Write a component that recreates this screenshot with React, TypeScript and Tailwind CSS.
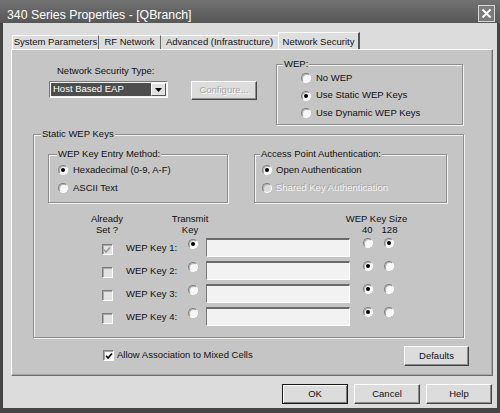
import React from 'react';

// classic sunken radio button
function Radio({ on = false, dim = false }: { on?: boolean; dim?: boolean }) {
  return (
    <span
      className={`flex items-center justify-center w-[10px] h-[10px] shrink-0 rounded-full border border-t-[#7d7d7d] border-l-[#7d7d7d] border-r-white border-b-white shadow-[inset_1px_1px_0_#b4b4b4] ${
        dim ? 'bg-[#dcdcdc]' : 'bg-[#f7f7f7]'
      }`}
    >
      {on && <span className="w-[4px] h-[4px] rounded-full bg-black" />}
    </span>
  );
}

function Check({ on = false, dim = false }: { on?: boolean; dim?: boolean }) {
  return (
    <span
      className={`flex items-center justify-center w-[11px] h-[11px] shrink-0 border border-t-[#7d7d7d] border-l-[#7d7d7d] border-r-white border-b-white shadow-[inset_1px_1px_0_#a8a8a8] ${
        dim ? 'bg-[#e2e2e2]' : 'bg-[#f7f7f7]'
      }`}
    >
      {on && (
        <svg viewBox="0 0 8 8" className="w-[8px] h-[8px]">
          <path d="M1 3.8 L3 6 L7 1.5" fill="none" stroke={dim ? '#9a9a9a' : '#000'} strokeWidth="1.6" />
        </svg>
      )}
    </span>
  );
}

function Group({
  label,
  lx = 'left-[6px]',
  className = '',
  children,
}: {
  label: string;
  lx?: string;
  className?: string;
  children?: React.ReactNode;
}) {
  return (
    <div className={`relative shrink-0 border border-[#8e8e8e] shadow-[inset_1px_1px_0_#f2f2f2,1px_1px_0_#f2f2f2] ${className}`}>
      <span className={`absolute ${lx} -top-[7px] px-[1px] leading-[12px] bg-[#c5c5c5]`}>{label}</span>
      {children}
    </div>
  );
}

function Btn({
  children,
  def = false,
  disabled = false,
  className = '',
}: {
  children: React.ReactNode;
  def?: boolean;
  disabled?: boolean;
  className?: string;
}) {
  const edge = def
    ? 'border border-[#1a1a1a] shadow-[inset_1px_1px_0_#fff,inset_-1px_-1px_0_#7a7a7a]'
    : 'border border-t-white border-l-white border-r-[#444] border-b-[#444] shadow-[inset_-1px_-1px_0_#8c8c8c]';
  return (
    <div className={`flex items-center justify-center shrink-0 bg-[#dcdcdc] ${edge} ${className}`}>
      <span className={disabled ? 'text-[#a6a6a6] [text-shadow:1px_1px_0_#fff]' : ''}>{children}</span>
    </div>
  );
}

function KeyRow({ n, set, tx, big }: { n: number; set?: boolean; tx?: boolean; big?: boolean }) {
  return (
    <div className="flex items-start h-[23px]">
      <span className="ml-[58px] w-[30px] mt-[6px] flex justify-center">
        <Check on={set} dim />
      </span>
      <span className="w-[66px] pl-[4px] mt-[4px] leading-[12px]">WEP Key {n}:</span>
      <span className="mt-[1px]">
        <Radio on={tx} />
      </span>
      <div className="ml-[8px] w-[144px] h-[19px] bg-[#f2f2f2] border-t-2 border-l border-r border-b border-t-[#6a6a6a] border-l-[#7a7a7a] border-r-white border-b-white" />
      <span className="ml-[13px]">
        <Radio on={!big} />
      </span>
      <span className="ml-[11px]">
        <Radio on={big} />
      </span>
    </div>
  );
}

export default function App() {
  return (
    <div className="w-[500px] h-[413px] flex flex-col bg-[#454545] font-['Liberation_Sans',Arial,sans-serif] text-[9.5px] text-[#111] select-none overflow-hidden">
      {/* Title bar */}
      <div className="h-[23px] shrink-0 flex items-start justify-between pl-[7px] pr-[5px] bg-gradient-to-b from-[#727272] to-[#575757]">
        <span className="mt-[7px] leading-[16px] text-[12.3px] text-white">340 Series Properties - [QBranch]</span>
        <span className="mt-[5px] w-[17px] h-[17px] flex items-center justify-center bg-[#7c7c7c] border border-[#d6d6d6]">
          <svg viewBox="0 0 11 11" className="w-[11px] h-[11px]">
            <path d="M1.5 1.5 L9.5 9.5 M9.5 1.5 L1.5 9.5" stroke="#fff" strokeWidth="1.8" />
          </svg>
        </span>
      </div>

      {/* Dialog body */}
      <div className="mx-[3px] h-[385px] shrink-0 flex flex-col bg-[#dcdcdc]">
        {/* Tabs */}
        <div className="mt-[9px] ml-[9px] h-[17px] flex items-end">
          <div className="w-[87px] h-[14px] flex items-center justify-center border-t border-l border-r border-t-white border-l-white border-r-[#6a6a6a]">
            System Parameters
          </div>
          <div className="w-[62px] h-[14px] flex items-center justify-center border-t border-r border-t-white border-r-[#6a6a6a]">
            RF Network
          </div>
          <div className="w-[117px] h-[14px] flex items-center justify-center border-t border-t-white">
            Advanced (Infrastructure)
          </div>
          <div className="w-[82px] h-[17px] pt-[3px] flex items-center justify-center bg-[#dedede] border-t border-l border-r-2 border-t-white border-l-white border-r-[#555]">
            Network Security
          </div>
        </div>

        {/* Tab panel */}
        <div className="ml-[8px] w-[482px] h-[327px] shrink-0 flex flex-col bg-[#c5c5c5] border border-t-white border-l-white border-r-[#6e6e6e] border-b-[#6e6e6e] shadow-[inset_-1px_-1px_0_#a4a4a4]">
          <div className="mt-[14px] flex items-start">
            <div className="w-[264px] flex flex-col">
              <span className="ml-[45px] mt-[1px] leading-[11px]">Network Security Type:</span>
              <div className="ml-[37px] mt-[5px] flex items-start">
                <div className="w-[119px] h-[17px] flex p-[1px] bg-[#f2f2f2] border border-t-[#7a7a7a] border-l-[#7a7a7a] border-r-white border-b-white">
                  <span className="flex-1 flex items-center pl-[2px] bg-[#4e4e4e] text-white">Host Based EAP</span>
                  <span className="w-[15px] flex items-center justify-center bg-[#e2e2e2] border border-t-white border-l-white border-r-[#555] border-b-[#555]">
                    <svg viewBox="0 0 7 4" className="w-[7px] h-[4px]">
                      <path d="M0 0 H7 L3.5 4 Z" fill="#000" />
                    </svg>
                  </span>
                </div>
                <Btn disabled className="ml-[23px] w-[66px] h-[19px]">
                  Configure...
                </Btn>
              </div>
            </div>
            <Group label="WEP:" className="w-[187px] h-[61px]">
              <div className="flex flex-col pt-[7px] pl-[24px] gap-[5.5px]">
                <div className="h-[12px] flex items-center gap-[5px]">
                  <Radio />
                  <span>No WEP</span>
                </div>
                <div className="h-[12px] flex items-center gap-[5px]">
                  <Radio on />
                  <span>Use Static WEP Keys</span>
                </div>
                <div className="h-[12px] flex items-center gap-[5px]">
                  <Radio />
                  <span>Use Dynamic WEP Keys</span>
                </div>
              </div>
            </Group>
          </div>

          <Group label="Static WEP Keys" lx="left-[7px]" className="ml-[21px] mt-[9px] w-[431px] h-[204px]">
            <div className="flex pt-[19px] pl-[14px]">
              <Group label="WEP Key Entry Method:" lx="left-[8px]" className="w-[180px] h-[49px]">
                <div className="flex flex-col pt-[9px] pl-[9px] gap-[6px]">
                  <div className="h-[12px] flex items-center gap-[5px]">
                    <Radio on />
                    <span>Hexadecimal (0-9, A-F)</span>
                  </div>
                  <div className="h-[12px] flex items-center gap-[5px]">
                    <Radio />
                    <span>ASCII Text</span>
                  </div>
                </div>
              </Group>
              <Group label="Access Point Authentication:" lx="left-[5px]" className="ml-[26px] w-[193px] h-[49px]">
                <div className="flex flex-col pt-[9px] pl-[7px] gap-[6px]">
                  <div className="h-[12px] flex items-center gap-[4px]">
                    <Radio on />
                    <span>Open Authentication</span>
                  </div>
                  <div className="h-[12px] flex items-center gap-[4px]">
                    <Radio dim />
                    <span className="text-[#f4f4f4] [text-shadow:-1px_-1px_0_#a2a2a2]">Shared Key Authentication</span>
                  </div>
                </div>
              </Group>
            </div>

            {/* Column headers */}
            <div className="mt-[10px] flex leading-[11px] whitespace-nowrap">
              <div className="ml-[58px] w-[30px] flex flex-col items-center">
                <span>Already</span>
                <span>Set ?</span>
              </div>
              <div className="ml-[48px] w-[40px] flex flex-col items-center">
                <span>Transmit</span>
                <span>Key</span>
              </div>
              <div className="ml-[136px] w-[61px] flex flex-col">
                <span className="self-center">WEP Key Size</span>
                <span className="flex pl-[16px] gap-[9px]">
                  <span>40</span>
                  <span>128</span>
                </span>
              </div>
            </div>

            <div className="mt-[3px] flex flex-col">
              <KeyRow n={1} set tx big />
              <KeyRow n={2} />
              <KeyRow n={3} />
              <KeyRow n={4} />
            </div>
          </Group>

          <div className="mt-[8px] flex items-start">
            <span className="ml-[91px] mt-[4px]">
              <Check on />
            </span>
            <span className="ml-[3px] mt-[3px] leading-[12px]">Allow Association to Mixed Cells</span>
            <Btn className="ml-auto mr-[23px] w-[65px] h-[20px]">Defaults</Btn>
          </div>
        </div>

        {/* Dialog buttons */}
        <div className="mt-[8px] pr-[5px] flex justify-end gap-[6px]">
          <Btn def className="w-[66px] h-[20px]">
            OK
          </Btn>
          <Btn className="w-[66px] h-[20px]">Cancel</Btn>
          <Btn className="w-[66px] h-[20px]">Help</Btn>
        </div>
      </div>
    </div>
  );
}
